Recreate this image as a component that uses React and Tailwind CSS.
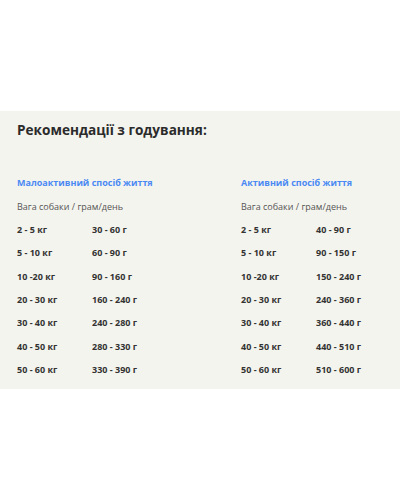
const sections = [
  {
    title: "Малоактивний спосіб життя",
    rows: [
      ["2 - 5 кг", "30 - 60 г"],
      ["5 - 10 кг", "60 - 90 г"],
      ["10 -20 кг", "90 - 160 г"],
      ["20 - 30 кг", "160 - 240 г"],
      ["30 - 40 кг", "240 - 280 г"],
      ["40 - 50 кг", "280 - 330 г"],
      ["50 - 60 кг", "330 - 390 г"],
    ],
  },
  {
    title: "Активний спосіб життя",
    rows: [
      ["2 - 5 кг", "40 - 90 г"],
      ["5 - 10 кг", "90 - 150 г"],
      ["10 -20 кг", "150 - 240 г"],
      ["20 - 30 кг", "240 - 360 г"],
      ["30 - 40 кг", "360 - 440 г"],
      ["40 - 50 кг", "440 - 510 г"],
      ["50 - 60 кг", "510 - 600 г"],
    ],
  },
];

export default function App() {
  return (
    <div className="w-[400px] h-[500px] bg-white pt-[111px]" style={{ fontFamily: '"Open Sans", "Noto Sans", sans-serif' }}>
      <div className="bg-[#f4f4ee] px-[17px] pt-[7px] pb-[8px]">
        <h2 className="h-[24px] leading-[24px] text-[13.6px] font-bold text-[#2b2b2b]">
          Рекомендації з годування:
        </h2>
        <div className="mt-[29.3px] grid grid-cols-[224px_1fr]">
          {sections.map((s) => (
            <div key={s.title} className="flex flex-col">
              <div className="h-[23.33px] leading-[23.33px] text-[9px] font-bold text-[#4a89f3]">{s.title}</div>
              <div className="h-[23.33px] leading-[23.33px] text-[9px] text-[#555]">Вага собаки / грам/день</div>
              {s.rows.map(([w, g]) => (
                <div key={w} className="flex h-[23.33px] leading-[23.33px] text-[9px] font-bold text-[#333]">
                  <span className="w-[75px]">{w}</span>
                  <span>{g}</span>
                </div>
              ))}
            </div>
          ))}
        </div>
      </div>
    </div>
  );
}
